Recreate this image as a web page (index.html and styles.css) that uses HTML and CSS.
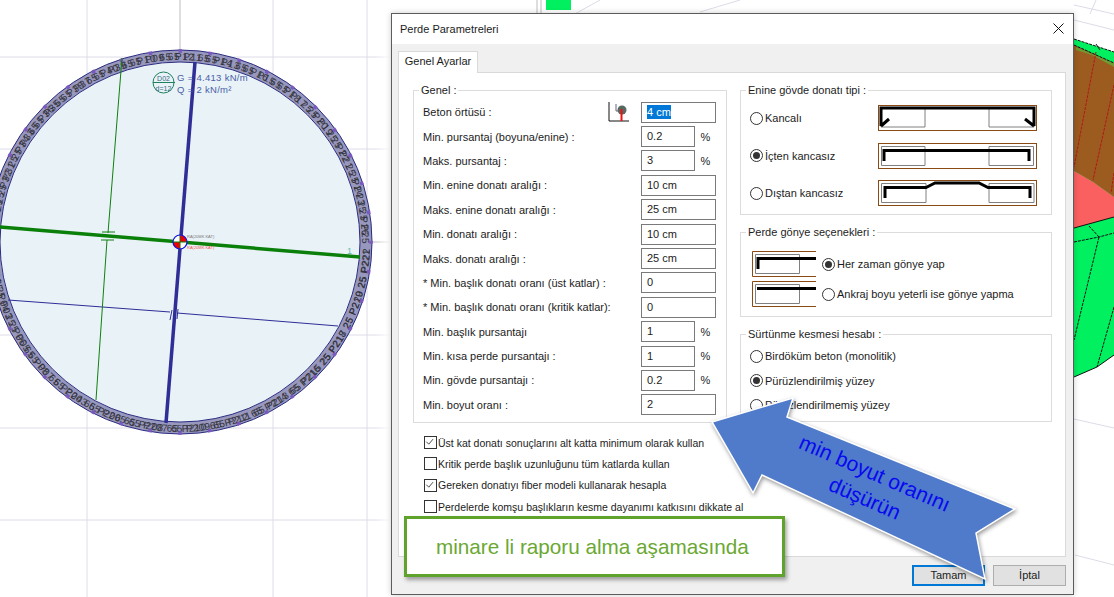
FILE: index.html
```html
<!DOCTYPE html>
<html lang="tr">
<head>
    <meta charset="UTF-8">
    <meta name="viewport" content="width=device-width, initial-scale=1.0">
    <title>Perde Parametreleri</title>
    <link rel="stylesheet" href="styles.css">
</head>
<body>
    <!-- arka plandaki cizim alani -->
    <svg class="scene" width="1114" height="597" viewBox="0 0 1114 597">
        <defs>
            <linearGradient id="fade" x1="0" x2="1" y1="0" y2="0">
                <stop offset="0" stop-color="#fff" stop-opacity="0"/>
                <stop offset="1" stop-color="#fff"/>
            </linearGradient>
            <path id="topArc" d="M-2 242A182 182 0 0 1 362 242"/>
            <path id="botArc" d="M-10 242A190 190 0 0 0 370 242"/>
        </defs>
        <g class="grid">
            <path d="M87 0V597M273 0V597M367 0V597M0 57H390M0 149H390M0 335H390M0 428H390"/>
            <path d="M0 520H390"/>
            <path d="M546 30L600 0M640 40L680 14M700 12L740 0M1074 20L1114 30M1074 5L1114 14M1074 419L1114 428M1075 555L1114 565M1090 14L1096 0"/>
        </g>
        <path class="axis" d="M180 0V50M372 242H390M537 0V13M541 0V13"/>
        <rect x="375" y="0" width="16" height="597" fill="url(#fade)"/>
        <rect class="greenbox" x="546" y="0" width="25" height="10"/>

        <!-- duvar halkasi -->
        <circle class="ring" cx="180" cy="242" r="186"/>
        <circle class="ringin" cx="180" cy="242" r="180"/>
        <circle class="ringedge" cx="180" cy="242" r="192"/>
        <text class="ringtxt"><textPath href="#topArc" textLength="565">25 P30 25 P32 25 P34 65 P36 65 P38 65 P40 65 P10 65 P12 65 P14 65 P16 65 P18 25 P20 25 P22 25 P24 25 P26</textPath></text>
        <text class="ringtxt"><textPath href="#topArc" textLength="565" startOffset="8">25 P29 25 P31 25 P33 65 P35 65 P37 65 P39 65 P09 65 P11 65 P13 65 P15 65 P17 25 P19 25 P21 25 P23 25 P25</textPath></text>
        <text class="ringtxt"><textPath href="#botArc" textLength="590">25 P02 25 P04 25 P06 65 P08 65 P204 65 P206 65 P208 65 P210 65 P212 65 P214 65 P216 25 P218 25 P220 25 P222</textPath></text>
        <text class="ringtxt"><textPath href="#botArc" textLength="580" startOffset="9">25 P01 25 P03 25 P05 65 P07 65 P203 65 P205 65 P207 65 P209 65 P211 65 P213 65 P215 25 P217 25 P219 25 P221</textPath></text>
        <circle class="nodes" cx="180" cy="242" r="191"/>

        <!-- aks cizgileri -->
        <path class="thinblue" d="M8 300L170 312M177 313L338 326M172 310L170 320M178 309L177 319"/>
        <path class="thingreen" d="M122 58L108 233M107 240L96 400M102 232H115M101 240H114"/>
        <path class="thickgreen" d="M0 227L360 257"/>
        <path class="thickblue" d="M195 62L166 423"/>

        <!-- merkez -->
        <circle class="centerbg" cx="180" cy="242" r="7"/>
        <path class="redq" d="M180 242V235A7 7 0 0 1 187 242ZM180 242V249A7 7 0 0 1 173 242Z"/>
        <path class="centerline" d="M173 242H187M180 235V249"/>
        <circle class="centerring" cx="180" cy="242" r="7"/>
        <text class="tinytxt" x="187" y="238">RA(20MK KAT)</text>
        <text class="tinytxt red" x="187" y="249">RA(20MK KAT)</text>
        <text class="axisno" x="347" y="254">1</text>

        <!-- doseme etiketi -->
        <circle class="tag" cx="163.500" cy="82.500" r="10.500"/>
        <path class="tag" d="M153 82.500H175"/>
        <text class="tagtxt" x="163.500" y="81">D02</text>
        <text class="tagtxt" x="163.500" y="91">d=12</text>
        <text class="loadtxt" x="177" y="81">G = 4.413 kN/m</text>
        <text class="loadtxt" x="177" y="93">Q = 2 kN/m²</text>

        <!-- sagdaki 3d model -->
        <path class="m-green" d="M1074 39L1114 52V355L1097 367L1074 377Z"/>
        <path class="m-brown" d="M1074 45L1114 63V197L1093 182L1074 171Z"/>
        <path class="m-olive" d="M1076 47L1114 63V67L1092 55L1076 50Z"/>
        <path class="m-pink" d="M1074 171L1093 182L1114 197V217L1074 228Z"/>
        <path class="m-red" d="M1096 52L1074 167M1114 85L1093 180M1114 173L1111 193"/>
        <path class="m-black" d="M1074 39L1114 52M1074 45L1114 63M1089 226L1099 237M1074 242L1099 237L1114 233M1099 237L1074 340M1114 307L1097 367M1096 44L1100 50"/>
        <path class="m-edge" d="M1074 228L1114 217M1074 377L1097 367L1114 355"/>
    </svg>

    <div class="dialog">
        <div class="titlebar">
            <span>Perde Parametreleri</span>
            <svg class="closeicon" width="11" height="11" viewBox="0 0 11 11"><path d="M.5 .5L10.500 10.500M10.500 .5L.5 10.500"/></svg>
        </div>
        <div class="dbody">
            <div class="tabstrip"><div class="tab">Genel Ayarlar</div></div>
            <div class="panel">
                <div class="leftcol">
                    <fieldset class="group genel">
                        <legend>Genel :</legend>
                        <div class="row">
                            <span>Beton örtüsü :</span>
                            <svg class="covericon" width="22" height="20" viewBox="0 0 22 20">
                                <path d="M1 0V19H21" fill="none" stroke="#111"/>
                                <circle cx="14" cy="8" r="4.500" fill="#54695f"/>
                                <path d="M8 2V9H18" fill="none" stroke="#667"/>
                                <path d="M13.500 7V19" stroke="#f01010" stroke-width="2"/>
                            </svg>
                            <div class="ipt"><span class="sel">4 cm</span></div>
                        </div>
                        <div class="row"><span>Min. pursantaj (boyuna/enine) :</span><div class="ipt short">0.2</div><span class="pct">%</span></div>
                        <div class="row"><span>Maks. pursantaj :</span><div class="ipt short">3</div><span class="pct">%</span></div>
                        <div class="row"><span>Min. enine donatı aralığı :</span><div class="ipt">10 cm</div></div>
                        <div class="row"><span>Maks. enine donatı aralığı :</span><div class="ipt">25 cm</div></div>
                        <div class="row"><span>Min. donatı aralığı :</span><div class="ipt">10 cm</div></div>
                        <div class="row"><span>Maks. donatı aralığı :</span><div class="ipt">25 cm</div></div>
                        <div class="row"><span>* Min. başlık donatı oranı (üst katlar) :</span><div class="ipt">0</div></div>
                        <div class="row"><span>* Min. başlık donatı oranı (kritik katlar):</span><div class="ipt">0</div></div>
                        <div class="row"><span>Min. başlık pursantajı</span><div class="ipt short">1</div><span class="pct">%</span></div>
                        <div class="row"><span>Min. kısa perde pursantajı :</span><div class="ipt short">1</div><span class="pct">%</span></div>
                        <div class="row"><span>Min. gövde pursantajı :</span><div class="ipt short">0.2</div><span class="pct">%</span></div>
                        <div class="row"><span>Min. boyut oranı :</span><div class="ipt">2</div></div>
                    </fieldset>
                    <div class="checks">
                        <div class="chk"><svg class="box" width="13" height="13" viewBox="0 0 13 13"><path d="M2.500 6.500L5.500 9.500L10.500 3.500"/></svg>Üst kat donatı sonuçlarını alt katta minimum olarak kullan</div>
                        <div class="chk"><svg class="box" width="13" height="13" viewBox="0 0 13 13"></svg>Kritik perde başlık uzunluğunu tüm katlarda kullan</div>
                        <div class="chk"><svg class="box" width="13" height="13" viewBox="0 0 13 13"><path d="M2.500 6.500L5.500 9.500L10.500 3.500"/></svg>Gereken donatıyı fiber modeli kullanarak hesapla</div>
                        <div class="chk"><svg class="box" width="13" height="13" viewBox="0 0 13 13"></svg>Perdelerde komşu başlıkların kesme dayanımı katkısını dikkate al</div>
                    </div>
                </div>
                <div class="rightcol">
                    <fieldset class="group enine">
                        <legend>Enine gövde donatı tipi :</legend>
                        <div class="typerow">
                            <span class="radio"></span><span>Kancalı</span>
                            <svg class="thumb" width="159" height="26" viewBox="0 0 159 26">
                                <rect class="tb" x=".5" y=".5" width="158" height="25"/>
                                <path class="tg" d="M3 3H47V22H3ZM111 3H156V22H111Z"/>
                                <path class="tk" d="M3 21V3H156V21M3 21L11 14M156 21L147 14"/>
                            </svg>
                        </div>
                        <div class="typerow">
                            <span class="radio on"></span><span>İçten kancasız</span>
                            <svg class="thumb" width="159" height="26" viewBox="0 0 159 26">
                                <rect class="tb" x=".5" y=".5" width="158" height="25"/>
                                <path class="tg" d="M3.500 3.500H47V22.500H3.500ZM111 3.500H155.500V22.500H111Z"/>
                                <path class="tk" d="M6 18V7.500H151V18"/>
                            </svg>
                        </div>
                        <div class="typerow">
                            <span class="radio"></span><span>Dıştan kancasız</span>
                            <svg class="thumb" width="159" height="26" viewBox="0 0 159 26">
                                <rect class="tb" x=".5" y=".5" width="158" height="25"/>
                                <path class="tg" d="M3.500 3.500H48V22.500H3.500ZM111 3.500H156V22.500H111Z"/>
                                <path class="tk" d="M7 18V7.500H48L57 3H101L110 7.500H152V18"/>
                            </svg>
                        </div>
                    </fieldset>
                    <fieldset class="group gonye">
                        <legend>Perde gönye seçenekleri :</legend>
                        <div class="gonyerow">
                            <svg class="thumb2" width="64" height="26" viewBox="0 0 64 26">
                                <path class="tb" d="M64 .5H.5V25.500H64"/>
                                <path class="tg" d="M3.500 3.500H47.500V22.500H3.500Z"/>
                                <path class="tk" d="M6 18V7.500H64"/>
                            </svg>
                            <span class="radio on"></span><span>Her zaman gönye yap</span>
                        </div>
                        <div class="gonyerow">
                            <svg class="thumb2" width="64" height="26" viewBox="0 0 64 26">
                                <path class="tb" d="M64 .5H.5V25.500H64"/>
                                <path class="tg" d="M3.500 3.500H47.500V22.500H3.500Z"/>
                                <path class="tk" d="M5 7.500H64"/>
                            </svg>
                            <span class="radio"></span><span>Ankraj boyu yeterli ise gönye yapma</span>
                        </div>
                    </fieldset>
                    <fieldset class="group surtunme">
                        <legend>Sürtünme kesmesi hesabı :</legend>
                        <div class="frow"><span class="radio"></span><span>Birdöküm beton (monolitik)</span></div>
                        <div class="frow"><span class="radio on"></span><span>Pürüzlendirilmiş yüzey</span></div>
                        <div class="frow"><span class="radio"></span><span>Pürüzlendirilmemiş yüzey</span></div>
                    </fieldset>
                </div>
            </div>
            <div class="footer">
                <div class="btn primary">Tamam</div>
                <div class="btn">İptal</div>
            </div>
        </div>
    </div>

    <!-- uzerine eklenen notlar -->
    <div class="note">minare li raporu alma aşamasında</div>
    <svg class="arrow" width="1114" height="597" viewBox="0 0 1114 597">
        <polygon points="712,422 793,398 787,417 1015,509 976,533 985,579 762,475 753,493"/>
        <text x="872" y="480" transform="rotate(23.500 872 480)">min boyut oranını</text>
        <text x="862" y="505" transform="rotate(23.500 862 505)">düşürün</text>
    </svg>
</body>
</html>
```

FILE: styles.css
```css
html, body {
    margin: 0;
    height: 100%;
    overflow: hidden;
    background-color: #fff;
}
body {
    font-family: "Liberation Sans", sans-serif;
    font-size: 11px;
    color: #1c1c1c;
}

/* cizim alani */
.scene {
    position: absolute;
    left: 0;
    top: 0;
}
.grid path { fill: none; stroke: #dcdce8; stroke-width: 1; }
.axis { fill: none; stroke: #bdbdbd; stroke-width: 1; }
.greenbox { fill: #00f060; }
.ring { fill: none; stroke: #9898be; stroke-width: 12; }
.ringin { fill: #e9f2f7; stroke: #2a2a80; stroke-width: 1; }
.ringedge { fill: none; stroke: #2a2a80; stroke-width: 1; }
.ringtxt { font: 10px "Liberation Sans", sans-serif; fill: #33333c; }
.nodes { fill: none; stroke: #7a58c0; stroke-width: 3.500; stroke-dasharray: 3.500 26.500; stroke-dashoffset: 1.750; }
.thinblue { fill: none; stroke: #2e2e96; stroke-width: 1; }
.thingreen { fill: none; stroke: #0f800f; stroke-width: 1; }
.thickgreen { fill: none; stroke: #0a7f0a; stroke-width: 3.500; }
.thickblue { fill: none; stroke: #2e2e96; stroke-width: 3.500; }
.centerbg { fill: #fff; }
.redq { fill: #f00000; }
.centerline { stroke: #0a7f0a; stroke-width: 1; }
.centerring { fill: none; stroke: #1010e0; stroke-width: 1.200; }
.tinytxt { font: 4px "Liberation Sans", sans-serif; fill: #777; }
.tinytxt.red { fill: #f05050; }
.axisno { font: 9px "Liberation Sans", sans-serif; fill: #66bbaa; }
.tag { fill: none; stroke: #1f8060; stroke-width: 1; }
.tagtxt { font: 7px "Liberation Sans", sans-serif; fill: #3a6a80; text-anchor: middle; }
.loadtxt { font: 9.500px "Liberation Sans", sans-serif; fill: #4a5fa8; letter-spacing: .3px; }
.m-green { fill: #00f060; }
.m-brown { fill: #9c5c20; }
.m-olive { fill: #6f9a34; }
.m-pink { fill: #fa6060; }
.m-red { fill: none; stroke: #b01818; stroke-width: 1; stroke-dasharray: 3 1; }
.m-black { fill: none; stroke: #111; stroke-width: 1; stroke-dasharray: 3 1; }
.m-edge { fill: none; stroke: #111; stroke-width: 1; }

/* pencere */
.dialog {
    position: absolute;
    left: 391px;
    top: 13px;
    width: 683px;
    height: 582px;
    box-sizing: border-box;
    border: 1px solid #5c5c5c;
    background-color: #f0f0f0;
    box-shadow: 0 0 6px rgba(0,0,0,.2);
}
.titlebar {
    height: 29px;
    padding: 0 9px 1px 8px;
    display: flex;
    align-items: center;
    justify-content: space-between;
    background-color: #fff;
}
.closeicon path { fill: none; stroke: #111; stroke-width: 1; }
.dbody { padding: 7px 7px 0 6px; }
.tabstrip { display: flex; height: 21px; }
.tab {
    width: 80px;
    height: 22px;
    box-sizing: border-box;
    background-color: #fff;
    border: 1px solid #d9d9d9;
    border-bottom: 0;
    text-align: center;
    line-height: 19px;
    position: relative;
    z-index: 1;
}
.panel {
    height: 485px;
    box-sizing: border-box;
    border: 1px solid #d9d9d9;
    background-color: #fff;
    padding: 10px 13px 0 14px;
    display: flex;
    gap: 13px;
}
.leftcol { width: 314px; }
.rightcol { width: 312px; display: flex; flex-direction: column; gap: 10px; }

fieldset.group {
    margin: 0;
    box-sizing: border-box;
    border: 1px solid #dcdcdc;
}
.group legend {
    margin-left: -4px;
    padding: 0 2px;
    height: 14px;
    line-height: 14px;
}
.genel { height: 340px; padding: 3px 10px 0 9px; }
.enine { height: 132px; padding: 8px 14px 0 9px; }
.gonye { height: 92px; padding: 12px 0 0 9px; }
.surtunme { height: 95px; padding: 3px 0 0 9px; }

.row {
    height: 24.400px;
    display: flex;
    align-items: center;
}
.row > span:first-child { margin-right: auto; }
.covericon { margin-right: 11px; }
.ipt {
    width: 75px;
    height: 21px;
    box-sizing: border-box;
    border: 1px solid #7a7a7a;
    padding-left: 5px;
    line-height: 19px;
    background-color: #fff;
}
.ipt.short { width: 54px; }
.pct { width: 21px; text-align: center; }
.sel { background-color: #0078d7; color: #fff; padding: 1px 0; }

.checks { margin: 9px 0 0 11px; font-size: 10.500px; }
.chk {
    height: 21.300px;
    display: flex;
    align-items: center;
    gap: 1px;
    white-space: nowrap;
}
.box {
    box-sizing: border-box;
    border: 1px solid #333;
    background-color: #fff;
    flex: none;
}
.box path { fill: none; stroke: #444; stroke-width: 1.100; transform: translate(-1px,-1px); }

.radio {
    width: 13px;
    height: 13px;
    box-sizing: border-box;
    border: 1px solid #333;
    border-radius: 50%;
    background-color: #fff;
    margin-right: 2px;
    flex: none;
    display: flex;
    align-items: center;
    justify-content: center;
}
.radio.on::after {
    content: "";
    width: 7px;
    height: 7px;
    border-radius: 50%;
    background-color: #333;
}
.typerow {
    height: 26px;
    margin-bottom: 11.500px;
    display: flex;
    align-items: center;
}
.thumb { margin-left: auto; flex: none; }
.tb { fill: none; stroke: #8a4a14; stroke-width: 1; }
.tg { fill: none; stroke: #808080; stroke-width: 1; }
.tk { fill: none; stroke: #000; stroke-width: 3; }
.gonyerow {
    height: 26px;
    margin: 0 0 4px 2px;
    display: flex;
    align-items: center;
}
.thumb2 { margin-right: 6px; flex: none; }
.frow {
    height: 24.500px;
    display: flex;
    align-items: center;
}

.footer {
    margin-top: 8px;
    display: flex;
    justify-content: flex-end;
    gap: 8px;
}
.btn {
    width: 73px;
    height: 21px;
    box-sizing: border-box;
    border: 1px solid #adadad;
    background-color: #e1e1e1;
    text-align: center;
    line-height: 19px;
}
.btn.primary { border: 2px solid #0078d7; line-height: 17px; }

/* notlar */
.note {
    position: absolute;
    left: 404px;
    top: 516px;
    width: 381px;
    height: 61px;
    box-sizing: border-box;
    border: 3px solid #5fa22c;
    background-color: #fff;
    padding-left: 29px;
    line-height: 56px;
    font-size: 20.700px;
    color: #6aa832;
    box-shadow: 2px 3px 4px rgba(0,0,0,.35);
}
.arrow {
    position: absolute;
    left: 0;
    top: 0;
    pointer-events: none;
}
.arrow polygon {
    fill: #4f7bca;
    stroke: #fff;
    stroke-width: 1.500;
    filter: drop-shadow(1px 2px 2px rgba(0,0,0,.4));
}
.arrow text {
    font-size: 21px;
    fill: #0808f0;
    text-anchor: middle;
}
```
